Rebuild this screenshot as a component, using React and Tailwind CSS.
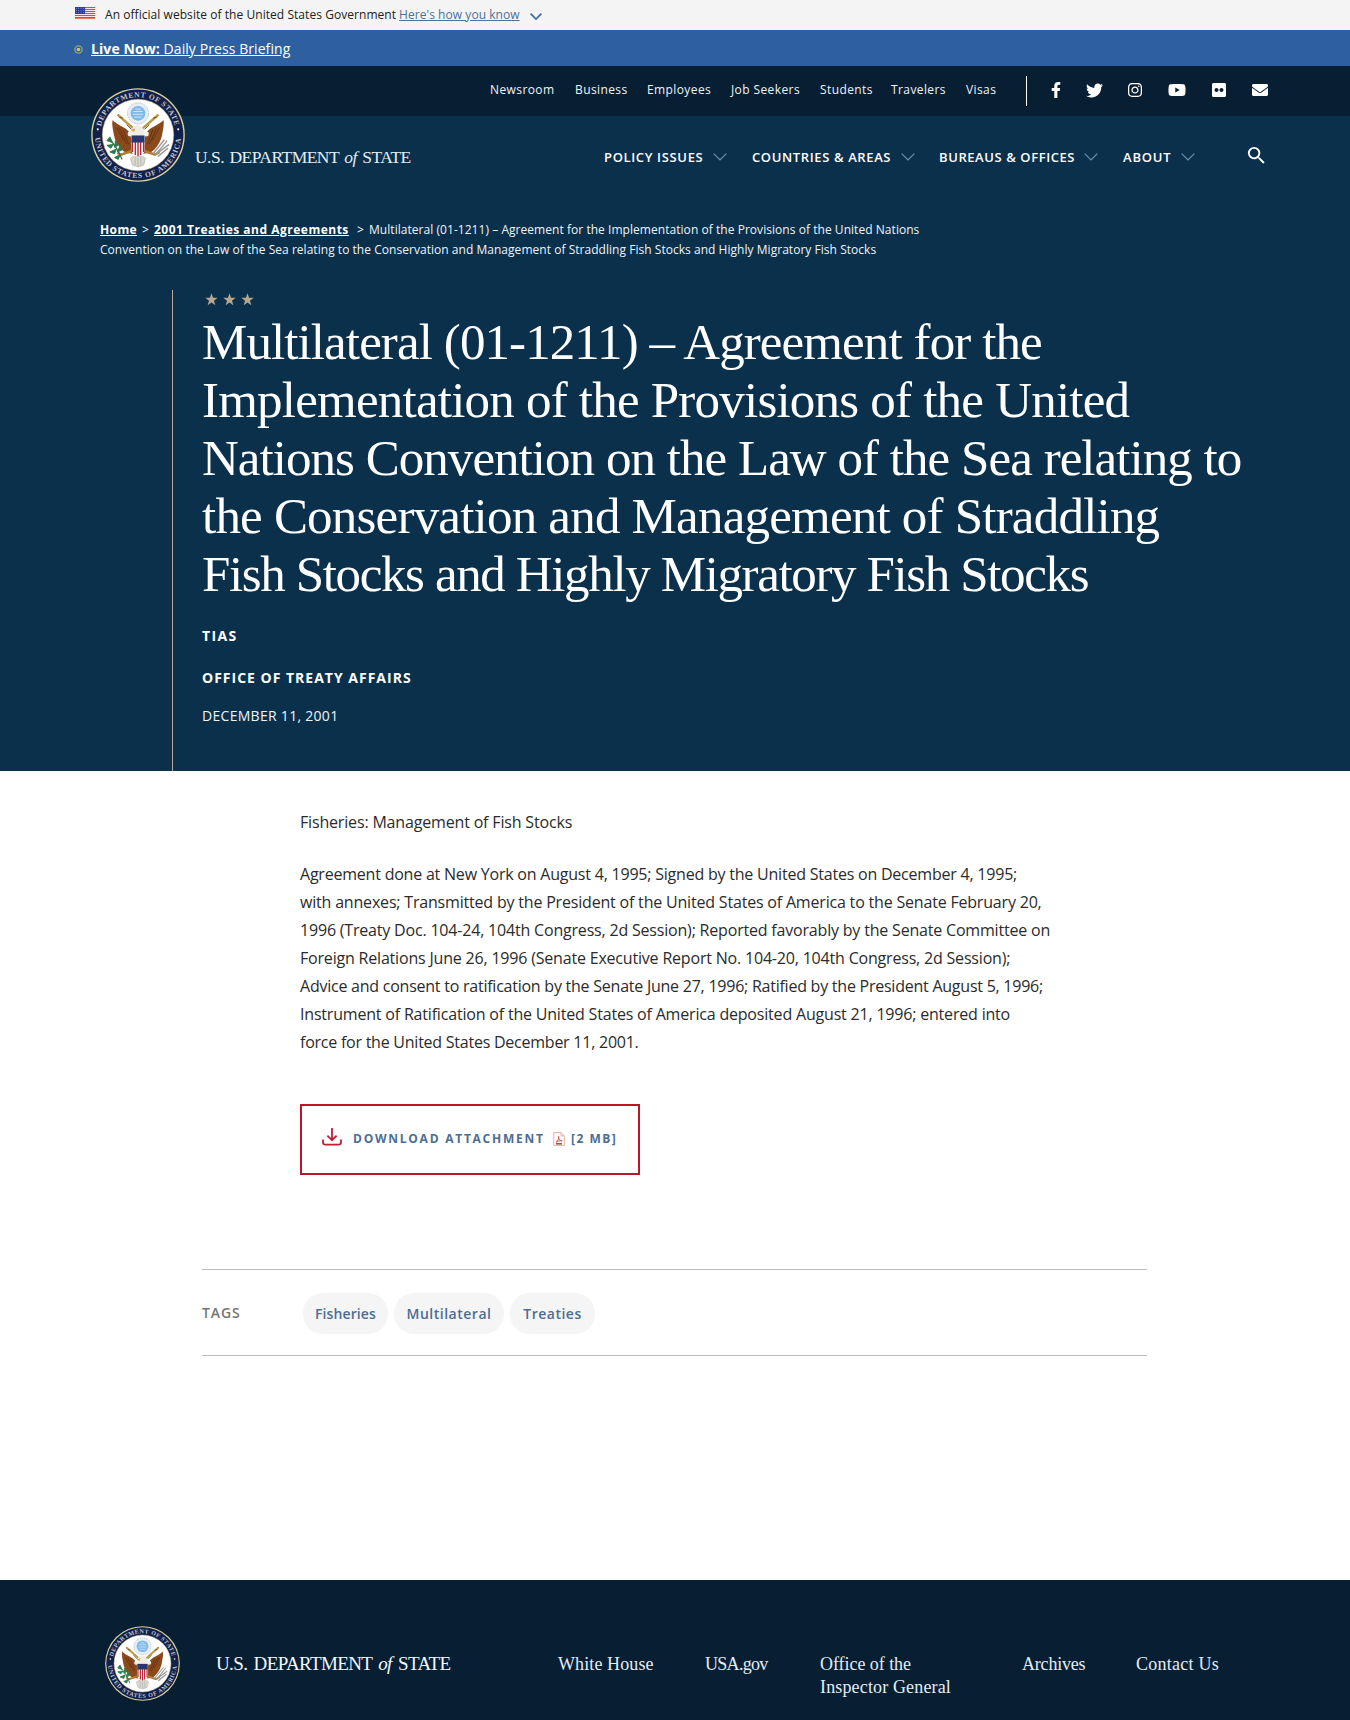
import React from "react";
import { FaFacebookF, FaTwitter, FaInstagram, FaYoutube, FaFlickr, FaEnvelope } from "react-icons/fa";
import { MdSearch } from "react-icons/md";

function Chevron({ className, width = 1.2 }) {
  return (
    <svg viewBox="0 0 14 8" className={className} fill="none" stroke="currentColor" strokeWidth={width}>
      <path d="M0.7 0.7 L7 7 L13.3 0.7" />
    </svg>
  );
}

function Flag() {
  return (
    <svg viewBox="0 0 20 12" className="h-3 w-5 shrink-0">
      <rect width="20" height="12" fill="#fff" />
      {[0, 2, 4, 6, 8, 10].map((y) => (
        <rect key={y} y={y} width="20" height="1.15" fill="#e0492f" />
      ))}
      <rect y="11.3" width="20" height="0.7" fill="#e0492f" />
      <rect width="10" height="7" fill="#2b3f96" />
      {[1.2, 3.4, 5.6].map((y) =>
        [1.2, 3.6, 6, 8.4].map((x) => <circle key={x + "-" + y} cx={x} cy={y} r="0.45" fill="#c5cdf0" />)
      )}
    </svg>
  );
}

function Seal({ className, id }) {
  return (
    <svg viewBox="0 0 100 100" className={className}>
      <defs>
        <path id={id + "-top"} d="M 9.7 50 A 40.3 40.3 0 0 1 90.3 50" />
        <path id={id + "-bottom"} d="M 4.2 50 A 45.8 45.8 0 0 0 95.8 50" />
      </defs>
      <circle cx="50" cy="50" r="49.8" fill="#d9d29a" />
      <circle cx="50" cy="50" r="48.3" fill="#13204a" />
      <circle cx="50" cy="50" r="38" fill="#fff" stroke="#b9b48a" strokeWidth="0.6" />
      <g fill="#c3c8d2" fontFamily="Liberation Serif, serif" fontSize="8" fontWeight="700">
        <text textAnchor="middle" letterSpacing="0.65">
          <textPath href={"#" + id + "-top"} startOffset="50%">DEPARTMENT OF STATE</textPath>
        </text>
        <text textAnchor="middle" letterSpacing="0.9">
          <textPath href={"#" + id + "-bottom"} startOffset="50%">UNITED STATES OF AMERICA</textPath>
        </text>
      </g>
      <circle cx="7.2" cy="44" r="1.1" fill="#fff" />
      <circle cx="92.8" cy="44" r="1.1" fill="#fff" />
      <circle cx="50" cy="27" r="11.3" fill="#e6edf4" stroke="#a9b9c9" strokeWidth="0.9" strokeDasharray="1.5 1" />
      <circle cx="50" cy="27" r="7.8" fill="#7db8e6" />
      <path d="M45 25h10M44.5 28h11M46 31h8M47 22.5h6" stroke="#d5eafa" strokeWidth="1" />
      <path d="M45 43 L29 29 M55 43 L71 29" stroke="#b99a45" strokeWidth="2.6" strokeLinecap="round" />
      <path d="M30 31 l4 1 M70 31 l-4 1 M38 39l5 5 M62 39l-5 5" stroke="#6d5a28" strokeWidth="1" />
      <path d="M23 34 C27 39 36 41 40 46 C42 49 43 53 43 58 L45 70 L37 69 C30 65 25 56 24 48 C23 42 22 38 23 34Z" fill="#8a4a1c" />
      <path d="M77 34 C73 39 64 41 60 46 C58 49 57 53 57 58 L55 70 L63 69 C70 65 75 56 76 48 C77 42 78 38 77 34Z" fill="#8a4a1c" />
      <path d="M27 42l8 14M30 42l8 18M34 44l6 16M73 42l-8 14M70 42l-8 18M66 44l-6 16" stroke="#5b2c10" strokeWidth="0.8" />
      <path d="M43 47 C43 41 47 39 51 40 C55 41 57 44 57 48 L56 52 L44 52Z" fill="#efece2" />
      <circle cx="41.5" cy="49" r="2.6" fill="#f4f3ee" />
      <circle cx="59" cy="49" r="2.6" fill="#f4f3ee" />
      <path d="M47 43 L42 44.5 L46 46.5Z" fill="#d6a437" />
      <path d="M42 75 C44 71 56 71 58 75 L56 82 L50 84 L44 82Z" fill="#d9d7d0" stroke="#a3a19a" strokeWidth="0.6" />
      <path d="M47 74v8M50 74v9M53 74v8" stroke="#a3a19a" strokeWidth="0.6" />
      <path d="M43 67 L32 71 L28 69 M57 67 L68 71 L73 68" stroke="#b07b32" strokeWidth="2.6" fill="none" />
      <path d="M43 51 H57 V66 C57 70 53 72 50 73 C47 72 43 70 43 66Z" fill="#fff" />
      <path d="M44 57v11M47.2 57v14.3M50 57v15.5M52.8 57v14.3M56 57v11" stroke="#b3263a" strokeWidth="1.5" />
      <path d="M43 50.5 H57 V58 H43Z" fill="#28366f" />
      <path d="M19 54 C23 58 28 63 33 76" stroke="#2d6a45" strokeWidth="1.2" fill="none" />
      <path d="M20 52l3 6-6-2zM17 61l7-1-3 4zM26 56l-1 7 4-2zM20 68l7-3-2 5zM31 61l-3 7 5-2zM25 74l6-3-2 5z" fill="#2d7a4b" stroke="#2d7a4b" strokeWidth="1" />
      <path d="M68 72L81 56M70 70L83 60M66 70L78 55M71 73L82 64" stroke="#9a9a96" strokeWidth="1.5" />
    </svg>
  );
}

function Star() {
  return (
    <svg viewBox="0 0 24 24" className="h-[13px] w-[13px]" fill="#b8a68f">
      <path d="M12 0.5l2.9 8.2 8.6.2-6.9 5.3 2.5 8.4L12 17.6l-7.1 5 2.5-8.4L.5 8.9l8.6-.2z" />
    </svg>
  );
}

function PdfIcon() {
  return (
    <svg viewBox="0 0 12 14" className="h-[14px] w-3" fill="none">
      <path d="M0.8 0.6 H8 L11.3 3.8 V13.4 H0.8Z" stroke="#e7a79b" strokeWidth="0.9" />
      <path d="M8 0.6V3.8H11.3" stroke="#e7a79b" strokeWidth="0.9" />
      <path d="M3 10.2 C5 9 6 6.5 5.6 4.4 C5.2 6.5 7 9 9.2 9 C7 8.4 4.5 9 3 10.2Z" stroke="#c5523c" strokeWidth="0.9" />
      <rect x="3" y="11" width="6" height="1.6" fill="#8f5b4e" />
    </svg>
  );
}

const topLinks = [
  ["Newsroom", "w-[85px]"],
  ["Business", "w-[72px]"],
  ["Employees", "w-[84px]"],
  ["Job Seekers", "w-[89px]"],
  ["Students", "w-[71px]"],
  ["Travelers", "w-[75px]"],
  ["Visas", "w-[60px]"],
];

const mainLinks = [
  ["POLICY ISSUES", "w-[148px]", "w-[109px] tracking-[0.65px]"],
  ["COUNTRIES & AREAS", "w-[187px]", "w-[149px] tracking-[0.62px]"],
  ["BUREAUS & OFFICES", "w-[184px]", "w-[145px] tracking-[0.58px]"],
  ["ABOUT", "w-[122px]", "w-[58px] tracking-[0.8px]"],
];

const social = [
  [FaFacebookF, "w-[38px]", "h-4 w-4"],
  [FaTwitter, "w-[39px]", "h-[17px] w-[17px]"],
  [FaInstagram, "w-[42px]", "h-4 w-4"],
  [FaYoutube, "w-[41px]", "h-[18px] w-[18px]"],
  [FaFlickr, "w-[43px]", "h-4 w-4"],
  [FaEnvelope, "w-[40px]", "h-4 w-4"],
];

const titleLines = [
  ["Multilateral (01-1211) – Agreement for the", "tracking-[-0.9px]"],
  ["Implementation of the Provisions of the United", "tracking-[-0.78px]"],
  ["Nations Convention on the Law of the Sea relating to", "tracking-[-0.96px]"],
  ["the Conservation and Management of Straddling", "tracking-[-0.79px]"],
  ["Fish Stocks and Highly Migratory Fish Stocks", "tracking-[-1.37px]"],
];

const bodyLines = [
  ["Agreement done at New York on August 4, 1995; Signed by the United States on December 4, 1995;", "tracking-[-0.215px]"],
  ["with annexes; Transmitted by the President of the United States of America to the Senate February 20,", "tracking-[-0.19px]"],
  ["1996 (Treaty Doc. 104-24, 104th Congress, 2d Session); Reported favorably by the Senate Committee on", "tracking-[-0.19px]"],
  ["Foreign Relations June 26, 1996 (Senate Executive Report No. 104-20, 104th Congress, 2d Session);", "tracking-[-0.19px]"],
  ["Advice and consent to ratification by the Senate June 27, 1996; Ratified by the President August 5, 1996;", "tracking-[-0.24px]"],
  ["Instrument of Ratification of the United States of America deposited August 21, 1996; entered into", "tracking-[-0.19px]"],
  ["force for the United States December 11, 2001.", "tracking-[-0.24px]"],
];

const tags = [
  ["Fisheries", "w-[85px] tracking-[0.1px]"],
  ["Multilateral", "w-[110px] tracking-[0.5px]"],
  ["Treaties", "w-[85px] tracking-[0.5px]"],
];

const footerLinks = [
  [[["White House", "tracking-[0.1px]"]], "w-[147px]"],
  [[["USA.gov", "tracking-[-0.7px]"]], "w-[115px]"],
  [[["Office of the", "tracking-[-0.05px]"], ["Inspector General", "tracking-[0.15px]"]], "w-[202px]"],
  [[["Archives", "tracking-[-0.2px]"]], "w-[114px]"],
  [[["Contact Us", "tracking-[0.25px]"]], "w-[100px]"],
];

export default function App() {
  return (
    <div className="h-[1720px] w-[1350px] overflow-hidden bg-white font-['Open_Sans',sans-serif] text-[#212121]">
      <div className="flex h-[30px] items-center bg-[#f4f4f4] pl-[75px] text-[12px] leading-[30px] tracking-[0.05px]">
        <div className="-mt-1"><Flag /></div>
        <span className="ml-[10px] whitespace-nowrap">An official website of the United States Government</span>
        <a className="ml-[3px] whitespace-nowrap text-[#4b7299] underline">Here's how you know</a>
        <Chevron className="mt-[2px] ml-[10px] h-[7px] w-[12px] text-[#3f6ba3]" width={2} />
      </div>

      <div className="flex h-9 items-center bg-[#2e5f9e] pl-[74px] text-[14px] text-white">
        <svg viewBox="0 0 10 10" className="mt-[2px] h-[9px] w-[9px]">
          <circle cx="5" cy="5" r="4" fill="none" stroke="#8fa968" strokeWidth="1.5" />
          <circle cx="5" cy="5" r="2" fill="#d5cf3c" />
        </svg>
        <a className="ml-[8px] whitespace-nowrap tracking-[0.08px] underline">
          <b className="font-bold">Live Now:</b> Daily Press Briefing
        </a>
      </div>

      <header className="relative bg-[#0a304c] text-white">
        <div className="flex h-[50px] items-center bg-[#081f33] pl-[490px] text-[12px] tracking-[0.4px]">
          {topLinks.map(([label, w]) => (
            <a key={label} className={"shrink-0 whitespace-nowrap pb-[2px] text-[#eef4f9] " + w}>{label}</a>
          ))}
          <div className="h-[30px] w-px shrink-0 bg-white" />
          <div className="mb-[2px] ml-[10px] flex items-center">
            {social.map(([Icon, w, size], i) => (
              <span key={i} className={"flex shrink-0 justify-center " + w}>
                <Icon className={size} />
              </span>
            ))}
          </div>
        </div>
        <nav className="flex h-[82px] items-center pl-[604px] text-[13px] font-semibold">
          {mainLinks.map(([label, w, tw]) => (
            <a key={label} className={"flex shrink-0 items-center whitespace-nowrap " + w}>
              <span className={"shrink-0 pt-[2px] " + tw}>{label}</span>
              <Chevron className="h-2 w-[14px] text-[#6f93ad]" />
            </a>
          ))}
          <MdSearch size={23} className="mb-1" />
        </nav>
        <div className="absolute top-[22px] left-[91px] flex items-end">
          <Seal id="header" className="h-[94px] w-[94px]" />
          <div className="mb-[13px] ml-[10px] whitespace-nowrap font-['Liberation_Serif',serif] text-[17.5px] leading-6 tracking-[-0.53px] word-spacing text-[#e3edf5] [word-spacing:1.6px]">
            U.S. DEPARTMENT <i>of</i> STATE
          </div>
        </div>
      </header>

      <section className="h-[573px] bg-[#0a304c] text-white">
        <div className="h-[92px] pt-[22px] pl-[100px] text-[12px] leading-5">
          <div className="flex whitespace-nowrap">
            <a className="w-[42px] font-bold tracking-[0.4px]"><span className="underline">Home</span></a>
            <span className="w-3">&gt;</span>
            <a className="w-[203px] font-bold tracking-[0.5px]"><span className="underline">2001 Treaties and Agreements</span></a>
            <span className="w-3">&gt;</span>
            <span className="tracking-[0.045px] text-[#eef4f9]">Multilateral (01-1211) – Agreement for the Implementation of the Provisions of the United Nations</span>
          </div>
          <div className="whitespace-nowrap tracking-[0.035px] text-[#eef4f9]">
            Convention on the Law of the Sea relating to the Conservation and Management of Straddling Fish Stocks and Highly Migratory Fish Stocks
          </div>
        </div>
        <div className="ml-[172px] h-[481px] border-l border-[#b3ac98] pl-[29px]">
          <div className="flex gap-[5px] pt-[3px] pl-[3px]">
            <Star /><Star /><Star />
          </div>
          <h1 className="mt-[7px] font-['Liberation_Serif',serif] text-[51px] leading-[58px]">
            {titleLines.map(([line, t]) => (
              <span key={line} className={"block w-max whitespace-nowrap " + t}>{line}</span>
            ))}
          </h1>
          <p className="mt-[23px] text-[14px] leading-5 font-bold tracking-[1.4px]">TIAS</p>
          <p className="mt-[22px] text-[14px] leading-5 font-bold tracking-[1px]">OFFICE OF TREATY AFFAIRS</p>
          <p className="mt-[18px] text-[14px] leading-5 tracking-[0.29px] text-[#eef4f9]">DECEMBER 11, 2001</p>
        </div>
      </section>

      <main className="h-[809px]">
        <div className="pt-[37px] pl-[300px] text-[16px] leading-7 text-[#2b2b2b]">
          <p className="tracking-[-0.17px]">Fisheries: Management of Fish Stocks</p>
          <div className="mt-6">
            {bodyLines.map(([line, t]) => (
              <span key={line} className={"block w-max whitespace-nowrap " + t}>{line}</span>
            ))}
          </div>
        </div>
        <div className="mt-12 ml-[300px] flex h-[71px] w-[340px] items-center border-2 border-[#bd1429] pb-[2px] pl-5 text-[12px] font-bold tracking-[1.5px] text-[#4c6d95]">
          <svg viewBox="0 0 20 18" className="mb-1 h-[18px] w-5" fill="none" stroke="#c01f33" strokeWidth="1.8">
            <path d="M10 0V12M5.4 7.6L10 12.2L14.6 7.6" />
            <path d="M1 11.5V14.2Q1 16.6 3.4 16.6H16.6Q19 16.6 19 14.2V11.5" />
          </svg>
          <span className="ml-[11px] w-[200px] whitespace-nowrap tracking-[1.75px]">DOWNLOAD ATTACHMENT</span>
          <PdfIcon />
          <span className="ml-[6px] whitespace-nowrap">[2 MB]</span>
        </div>
        <div className="mt-[94px] ml-[202px] flex h-[87px] w-[945px] items-center border-y border-[#bcbcbc] text-[14px] font-semibold">
          <span className="w-[101px] tracking-[0.9px] text-[#757575]">TAGS</span>
          <div className="mt-[2px] flex gap-[6px]">
            {tags.map(([label, w]) => (
              <a key={label} className={"flex h-[41px] items-center justify-center rounded-[20px] bg-[#f5f5f5] pb-px text-[#4c6d95] " + w}>{label}</a>
            ))}
          </div>
        </div>
      </main>

      <footer className="flex h-[140px] bg-[#081f33] pl-[105px] font-['Liberation_Serif',serif] text-white">
        <Seal id="footer" className="mt-[46px] h-[75px] w-[75px] shrink-0" />
        <div className="mt-[72px] ml-[36px] w-[342px] shrink-0 whitespace-nowrap text-[19px] leading-6 tracking-[-0.6px] text-[#f2f8fd] [word-spacing:2px]">
          U.S. DEPARTMENT <i>of</i> STATE
        </div>
        <div className="mt-[73px] flex text-[18px] leading-[23px] text-[#e3edf5]">
          {footerLinks.map(([lines, w]) => (
            <a key={lines[0][0]} className={"shrink-0 " + w}>
              {lines.map(([l, t]) => (
                <span key={l} className={"block w-max whitespace-nowrap " + t}>{l}</span>
              ))}
            </a>
          ))}
        </div>
      </footer>
    </div>
  );
}
